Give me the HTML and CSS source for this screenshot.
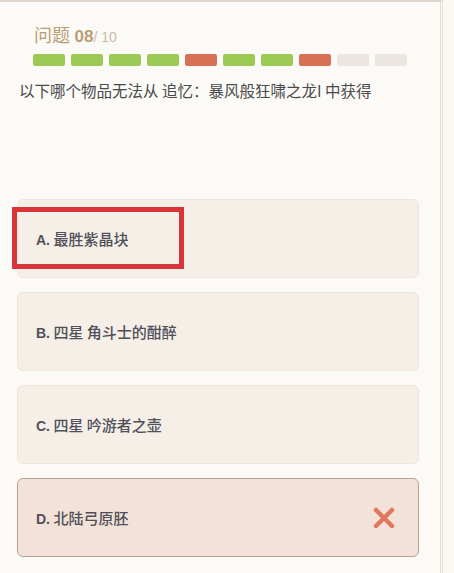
FILE: index.html
```html
<!DOCTYPE html>
<html>
  <head>
    <title>问题 08/10</title>
    <link rel="stylesheet" href="styles.css">
  </head>
  <body>
    <div class="panel">
      <div class="head">
        <span class="head-label">问题</span>
        <span class="head-num">08</span><span class="head-total">/ 10</span>
      </div>

      <div class="progress">
        <span class="seg ok"></span>
        <span class="seg ok"></span>
        <span class="seg ok"></span>
        <span class="seg ok"></span>
        <span class="seg bad"></span>
        <span class="seg ok"></span>
        <span class="seg ok"></span>
        <span class="seg bad"></span>
        <span class="seg"></span>
        <span class="seg"></span>
      </div>

      <p class="question">以下哪个物品无法从 追忆：暴风般狂啸之龙I 中获得</p>

      <div class="options">
        <div class="option"><span><b>A.</b> 最胜紫晶块</span></div>
        <div class="option"><span><b>B.</b> 四星 角斗士的酣醉</span></div>
        <div class="option"><span><b>C.</b> 四星 吟游者之壶</span></div>
        <div class="option option-wrong">
          <span><b>D.</b> 北陆弓原胚</span>
          <svg class="cross" width="24" height="24" viewBox="0 0 24 24">
            <path d="M4 4 L20 20 M20 4 L4 20" stroke="#e0785d" stroke-width="4.5" stroke-linecap="round" fill="none"/>
          </svg>
        </div>
      </div>

      <div class="mark"></div>
    </div>
  </body>
</html>
```

FILE: styles.css
```css
body {
  margin: 0;
  background-color: #fbf8f4;
  font-family: "Noto Sans CJK SC", "Noto Sans", sans-serif;
  overflow: hidden;
}
.panel {
  position: relative;
  width: 443px;
  height: 573px;
  background-color: #fcfaf7;
  border-right: 3px double #e6dccd;
  border-top: 2px solid #dcd6cf;
  box-sizing: border-box;
  padding-top: 20px;
}
.head {
  padding-left: 34px;
  height: 24px;
  line-height: 24px;
  color: #b89f76;
}
.head-label {
  font-size: 18px;
}
.head-num {
  font-family: "Liberation Sans", Arial, sans-serif;
  font-size: 17px;
  font-weight: bold;
  margin-left: 1px;
}
.head-total {
  font-family: "Liberation Sans", Arial, sans-serif;
  font-size: 14px;
  color: #cbbca4;
}
.progress {
  display: flex;
  gap: 6px;
  padding-left: 33px;
  margin-top: 8px;
}
.seg {
  width: 32px;
  height: 12px;
  border-radius: 2px;
  background-color: #ece6e0;
}
.seg.ok {
  background-color: #9ccb55;
}
.seg.bad {
  background-color: #d97157;
}
.question {
  margin: 13px 0 0 19px;
  font-size: 15.5px;
  line-height: 22px;
  color: #4a4a4c;
}
.options {
  margin-top: 98px;
  padding-left: 17px;
  width: 402px;
}
.option {
  display: flex;
  align-items: center;
  justify-content: space-between;
  height: 79px;
  box-sizing: border-box;
  padding: 0 18px;
  margin-bottom: 14px;
  background-color: #f6efe8;
  border: 1px solid #efe5da;
  border-radius: 6px;
  font-size: 15px;
  font-weight: 500;
  color: #50505a;
}
.option b {
  font-family: "Liberation Sans", Arial, sans-serif;
  font-weight: bold;
  font-size: 14px;
}
.option-wrong {
  background-color: #f3e2d8;
  border-color: #b9a091;
  padding-right: 22px;
}
.cross {
  display: block;
}
.mark {
  position: absolute;
  left: 12px;
  top: 205px;
  width: 172px;
  height: 62px;
  box-sizing: border-box;
  border: 5px solid #d9343a;
}
```
